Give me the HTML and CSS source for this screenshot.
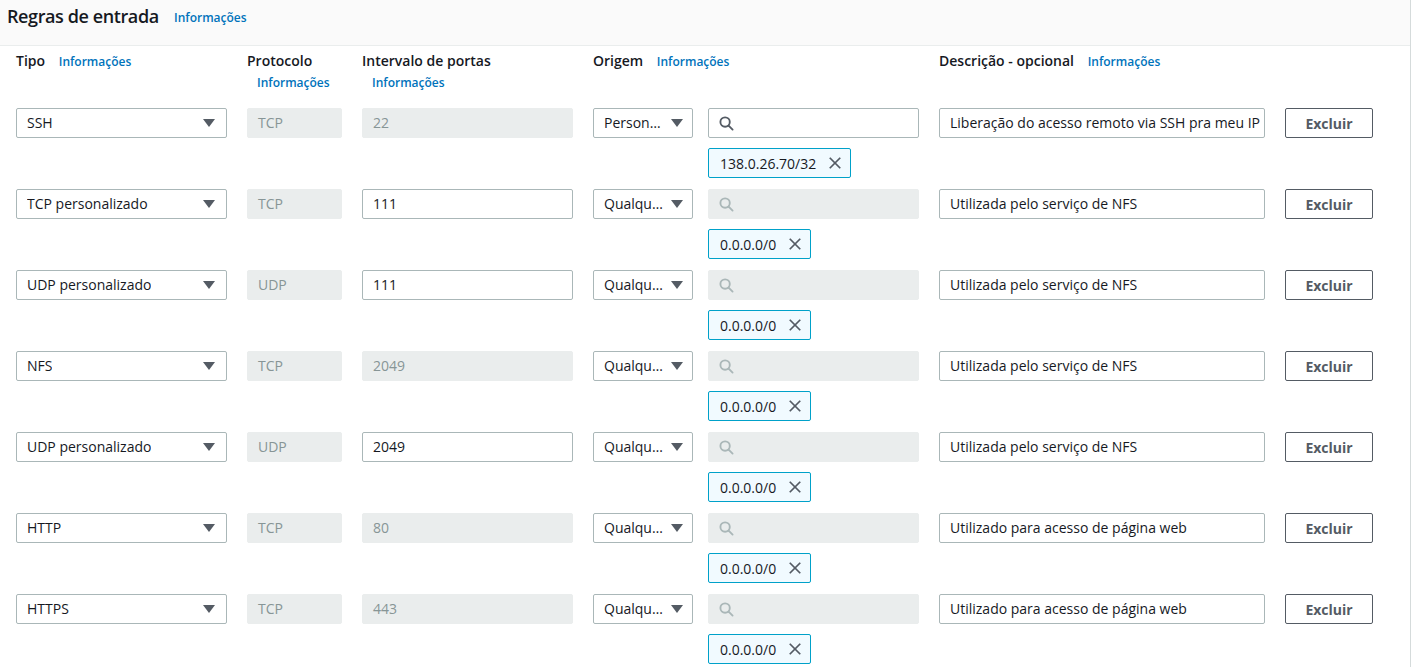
FILE: index.html
```html
<!DOCTYPE html>
<html lang="pt-BR">
<head>
<meta charset="utf-8">
<title>Regras de entrada</title>
<link rel="stylesheet" href="styles.css">
</head>
<body>
<div class="panel">
  <div class="panel-header">
    <h2 class="title">Regras de entrada <a class="info info-title" href="#">Informações</a></h2>
  </div>
  <div class="rules">
    <div class="col-head">Tipo <a class="info" href="#">Informações</a></div>
    <div class="col-head">Protocolo <a class="info" href="#">Informações</a></div>
    <div class="col-head">Intervalo de portas <a class="info" href="#">Informações</a></div>
    <div class="col-head">Origem <a class="info" href="#">Informações</a></div>
    <div class="col-head">Descrição - opcional <a class="info" href="#">Informações</a></div>
    <div class="col-head"></div>

    <!-- Row 1 -->
    <div class="select wide"><span class="select-text">SSH</span><span class="caret"></span></div>
    <div class="field disabled">TCP</div>
    <div class="field disabled">22</div>
    <div class="origin">
      <div class="origin-top">
        <div class="select narrow"><span class="select-text">Personalizado</span><span class="caret"></span></div>
        <div class="search"><svg class="search-icon" viewBox="0 0 16 16"><circle cx="6.5" cy="6.5" r="5" /><line x1="10.2" y1="10.2" x2="14.5" y2="14.5" /></svg></div>
      </div>
      <div class="token"><span>138.0.26.70/32</span><svg class="x-icon" viewBox="0 0 16 16"><line x1="2" y1="2" x2="14" y2="14"/><line x1="14" y1="2" x2="2" y2="14"/></svg></div>
    </div>
    <div class="field">Liberação do acesso remoto via SSH pra meu IP</div>
    <button class="btn">Excluir</button>

    <!-- Row 2 -->
    <div class="select wide"><span class="select-text">TCP personalizado</span><span class="caret"></span></div>
    <div class="field disabled">TCP</div>
    <div class="field">111</div>
    <div class="origin">
      <div class="origin-top">
        <div class="select narrow"><span class="select-text">Qualquer local</span><span class="caret"></span></div>
        <div class="search disabled"><svg class="search-icon" viewBox="0 0 16 16"><circle cx="6.5" cy="6.5" r="5" /><line x1="10.2" y1="10.2" x2="14.5" y2="14.5" /></svg></div>
      </div>
      <div class="token"><span>0.0.0.0/0</span><svg class="x-icon" viewBox="0 0 16 16"><line x1="2" y1="2" x2="14" y2="14"/><line x1="14" y1="2" x2="2" y2="14"/></svg></div>
    </div>
    <div class="field">Utilizada pelo serviço de NFS</div>
    <button class="btn">Excluir</button>

    <!-- Row 3 -->
    <div class="select wide"><span class="select-text">UDP personalizado</span><span class="caret"></span></div>
    <div class="field disabled">UDP</div>
    <div class="field">111</div>
    <div class="origin">
      <div class="origin-top">
        <div class="select narrow"><span class="select-text">Qualquer local</span><span class="caret"></span></div>
        <div class="search disabled"><svg class="search-icon" viewBox="0 0 16 16"><circle cx="6.5" cy="6.5" r="5" /><line x1="10.2" y1="10.2" x2="14.5" y2="14.5" /></svg></div>
      </div>
      <div class="token"><span>0.0.0.0/0</span><svg class="x-icon" viewBox="0 0 16 16"><line x1="2" y1="2" x2="14" y2="14"/><line x1="14" y1="2" x2="2" y2="14"/></svg></div>
    </div>
    <div class="field">Utilizada pelo serviço de NFS</div>
    <button class="btn">Excluir</button>

    <!-- Row 4 -->
    <div class="select wide"><span class="select-text">NFS</span><span class="caret"></span></div>
    <div class="field disabled">TCP</div>
    <div class="field disabled">2049</div>
    <div class="origin">
      <div class="origin-top">
        <div class="select narrow"><span class="select-text">Qualquer local</span><span class="caret"></span></div>
        <div class="search disabled"><svg class="search-icon" viewBox="0 0 16 16"><circle cx="6.5" cy="6.5" r="5" /><line x1="10.2" y1="10.2" x2="14.5" y2="14.5" /></svg></div>
      </div>
      <div class="token"><span>0.0.0.0/0</span><svg class="x-icon" viewBox="0 0 16 16"><line x1="2" y1="2" x2="14" y2="14"/><line x1="14" y1="2" x2="2" y2="14"/></svg></div>
    </div>
    <div class="field">Utilizada pelo serviço de NFS</div>
    <button class="btn">Excluir</button>

    <!-- Row 5 -->
    <div class="select wide"><span class="select-text">UDP personalizado</span><span class="caret"></span></div>
    <div class="field disabled">UDP</div>
    <div class="field">2049</div>
    <div class="origin">
      <div class="origin-top">
        <div class="select narrow"><span class="select-text">Qualquer local</span><span class="caret"></span></div>
        <div class="search disabled"><svg class="search-icon" viewBox="0 0 16 16"><circle cx="6.5" cy="6.5" r="5" /><line x1="10.2" y1="10.2" x2="14.5" y2="14.5" /></svg></div>
      </div>
      <div class="token"><span>0.0.0.0/0</span><svg class="x-icon" viewBox="0 0 16 16"><line x1="2" y1="2" x2="14" y2="14"/><line x1="14" y1="2" x2="2" y2="14"/></svg></div>
    </div>
    <div class="field">Utilizada pelo serviço de NFS</div>
    <button class="btn">Excluir</button>

    <!-- Row 6 -->
    <div class="select wide"><span class="select-text">HTTP</span><span class="caret"></span></div>
    <div class="field disabled">TCP</div>
    <div class="field disabled">80</div>
    <div class="origin">
      <div class="origin-top">
        <div class="select narrow"><span class="select-text">Qualquer local</span><span class="caret"></span></div>
        <div class="search disabled"><svg class="search-icon" viewBox="0 0 16 16"><circle cx="6.5" cy="6.5" r="5" /><line x1="10.2" y1="10.2" x2="14.5" y2="14.5" /></svg></div>
      </div>
      <div class="token"><span>0.0.0.0/0</span><svg class="x-icon" viewBox="0 0 16 16"><line x1="2" y1="2" x2="14" y2="14"/><line x1="14" y1="2" x2="2" y2="14"/></svg></div>
    </div>
    <div class="field">Utilizado para acesso de página web</div>
    <button class="btn">Excluir</button>

    <!-- Row 7 -->
    <div class="select wide"><span class="select-text">HTTPS</span><span class="caret"></span></div>
    <div class="field disabled">TCP</div>
    <div class="field disabled">443</div>
    <div class="origin">
      <div class="origin-top">
        <div class="select narrow"><span class="select-text">Qualquer local</span><span class="caret"></span></div>
        <div class="search disabled"><svg class="search-icon" viewBox="0 0 16 16"><circle cx="6.5" cy="6.5" r="5" /><line x1="10.2" y1="10.2" x2="14.5" y2="14.5" /></svg></div>
      </div>
      <div class="token"><span>0.0.0.0/0</span><svg class="x-icon" viewBox="0 0 16 16"><line x1="2" y1="2" x2="14" y2="14"/><line x1="14" y1="2" x2="2" y2="14"/></svg></div>
    </div>
    <div class="field">Utilizado para acesso de página web</div>
    <button class="btn">Excluir</button>
  </div>
</div>
</body>
</html>
```

FILE: styles.css
```css
* { box-sizing: border-box; }

html, body {
  margin: 0;
  padding: 0;
  background: #ffffff;
}

body {
  font-family: "Open Sans", "Noto Sans", Arial, sans-serif;
  font-size: 14px;
  color: #16191f;
  overflow: hidden;
}

.panel {
  width: 1411px;
  min-height: 667px;
  border-right: 1px solid #d5dbdb;
}

.panel-header {
  height: 46px;
  background: #fafafa;
  border-bottom: 1px solid #eaeded;
  padding: 4px 0 0 7px;
}

.title {
  margin: 0;
  font-size: 18px;
  line-height: 24px;
  font-weight: 600;
  letter-spacing: -0.4px;
  color: #16191f;
}

.info {
  display: inline-block;
  padding-left: 10px;
  font-size: 12px;
  font-weight: 600;
  letter-spacing: 0;
  color: #0073bb;
  text-decoration: none;
  white-space: nowrap;
}

.info-title {
  padding-left: 11px;
  vertical-align: 1px;
}

.rules {
  display: grid;
  grid-template-columns: 211px 95px 211px 326px 326px 88px;
  column-gap: 20px;
  row-gap: 11px;
  align-items: start;
  padding: 4px 0 0 16px;
}

.col-head {
  font-weight: 600;
  font-size: 14px;
  line-height: 21px;
  margin-bottom: 4px;
}

.select,
.field,
.search {
  height: 30px;
  border: 1px solid #aab7b8;
  border-radius: 2px;
  background: #ffffff;
  line-height: 28px;
  padding: 0 10px;
  white-space: nowrap;
  overflow: hidden;
}

.field.disabled,
.search.disabled {
  background: #eaeded;
  border-color: #eaeded;
  color: #879596;
}

.select {
  display: flex;
  align-items: center;
  justify-content: space-between;
  gap: 6px;
}

.select-text {
  overflow: hidden;
  text-overflow: ellipsis;
  white-space: nowrap;
  min-width: 0;
}

.caret {
  flex: none;
  width: 0;
  height: 0;
  border-left: 6px solid transparent;
  border-right: 6px solid transparent;
  border-top: 8px solid #545b64;
  margin-right: 1px;
}

.narrow {
  width: 100px;
  padding-right: 8px;
}

.origin {
  display: flex;
  flex-direction: column;
  gap: 10px;
}

.origin-top {
  display: flex;
  gap: 15px;
}

.search {
  width: 211px;
  display: flex;
  align-items: center;
}

.search-icon {
  width: 15px;
  height: 15px;
  fill: none;
  stroke: #545b64;
  stroke-width: 2;
  stroke-linecap: round;
}

.search.disabled .search-icon {
  stroke: #aab7b8;
}

.token {
  align-self: flex-start;
  margin-left: 115px;
  height: 30px;
  display: flex;
  align-items: center;
  gap: 12px;
  padding: 0 8px 0 11px;
  border: 1px solid #00a1c9;
  border-radius: 2px;
  background: #f1faff;
  white-space: nowrap;
}

.x-icon {
  width: 14px;
  height: 14px;
  stroke: #545b64;
  stroke-width: 2;
}

.btn {
  height: 30px;
  width: 88px;
  border: 1px solid #545b64;
  border-radius: 2px;
  background: #ffffff;
  color: #545b64;
  font-family: inherit;
  font-size: 14px;
  font-weight: 700;
  padding: 0;
}
```
